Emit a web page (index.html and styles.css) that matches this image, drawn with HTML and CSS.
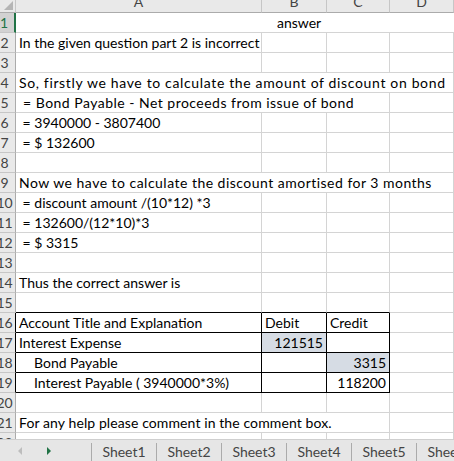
FILE: index.html
```html
<!DOCTYPE html>
<html lang="en">
<head>
    <meta charset="UTF-8">
    <title>answer</title>
    <link rel="stylesheet" href="styles.css">
</head>
<body>
    <div class="sheet">
        <div class="row col-head">
            <div class="corner"><span class="corner-tri"></span></div>
            <div class="ch">A</div>
            <div class="ch">B</div>
            <div class="ch">C</div>
            <div class="ch">D</div>
            <div class="ch"></div>
        </div>

        <div class="row">
            <div class="rh selected">1</div>
            <div class="cell span-all title">answer</div>
        </div>
        <div class="row">
            <div class="rh">2</div>
            <div class="cell">In the given question part 2 is incorrect</div>
            <div class="cell"></div><div class="cell"></div><div class="cell"></div><div class="cell"></div>
        </div>
        <div class="row">
            <div class="rh">3</div>
            <div class="cell"></div><div class="cell"></div><div class="cell"></div><div class="cell"></div><div class="cell"></div>
        </div>
        <div class="row">
            <div class="rh">4</div>
            <div class="cell span-4 loose-lg">So, firstly we have to calculate the amount of discount on bond</div>
            <div class="cell"></div>
        </div>
        <div class="row">
            <div class="rh">5</div>
            <div class="cell span-3 loose-md">&nbsp;= Bond Payable - Net proceeds from issue of bond</div>
            <div class="cell"></div><div class="cell"></div>
        </div>
        <div class="row">
            <div class="rh">6</div>
            <div class="cell">&nbsp;= 3940000 - 3807400</div>
            <div class="cell"></div><div class="cell"></div><div class="cell"></div><div class="cell"></div>
        </div>
        <div class="row">
            <div class="rh">7</div>
            <div class="cell">&nbsp;= $ 132600</div>
            <div class="cell"></div><div class="cell"></div><div class="cell"></div><div class="cell"></div>
        </div>
        <div class="row">
            <div class="rh">8</div>
            <div class="cell"></div><div class="cell"></div><div class="cell"></div><div class="cell"></div><div class="cell"></div>
        </div>
        <div class="row">
            <div class="rh">9</div>
            <div class="cell span-4 loose-md">Now we have to calculate the discount amortised for 3 months</div>
            <div class="cell"></div>
        </div>
        <div class="row">
            <div class="rh">10</div>
            <div class="cell">&nbsp;= discount amount /(10*12) *3</div>
            <div class="cell"></div><div class="cell"></div><div class="cell"></div><div class="cell"></div>
        </div>
        <div class="row">
            <div class="rh">11</div>
            <div class="cell">&nbsp;= 132600/(12*10)*3</div>
            <div class="cell"></div><div class="cell"></div><div class="cell"></div><div class="cell"></div>
        </div>
        <div class="row">
            <div class="rh">12</div>
            <div class="cell">&nbsp;= $ 3315</div>
            <div class="cell"></div><div class="cell"></div><div class="cell"></div><div class="cell"></div>
        </div>
        <div class="row">
            <div class="rh">13</div>
            <div class="cell"></div><div class="cell"></div><div class="cell"></div><div class="cell"></div><div class="cell"></div>
        </div>
        <div class="row">
            <div class="rh">14</div>
            <div class="cell">Thus the correct answer is</div>
            <div class="cell"></div><div class="cell"></div><div class="cell"></div><div class="cell"></div>
        </div>
        <div class="row">
            <div class="rh">15</div>
            <div class="cell b-bottom"></div><div class="cell b-bottom"></div><div class="cell b-bottom"></div><div class="cell"></div><div class="cell"></div>
        </div>

        <div class="row">
            <div class="rh b-right">16</div>
            <div class="cell boxed">Account Title and Explanation</div>
            <div class="cell boxed">Debit</div>
            <div class="cell boxed">Credit</div>
            <div class="cell"></div><div class="cell"></div>
        </div>
        <div class="row">
            <div class="rh b-right">17</div>
            <div class="cell boxed">Interest Expense</div>
            <div class="cell boxed num filled">121515</div>
            <div class="cell boxed"></div>
            <div class="cell"></div><div class="cell"></div>
        </div>
        <div class="row">
            <div class="rh b-right">18</div>
            <div class="cell boxed indent">Bond Payable</div>
            <div class="cell boxed"></div>
            <div class="cell boxed num filled">3315</div>
            <div class="cell"></div><div class="cell"></div>
        </div>
        <div class="row">
            <div class="rh b-right">19</div>
            <div class="cell boxed indent">Interest Payable ( 3940000*3%)</div>
            <div class="cell boxed"></div>
            <div class="cell boxed num">118200</div>
            <div class="cell"></div><div class="cell"></div>
        </div>

        <div class="row">
            <div class="rh">20</div>
            <div class="cell"></div><div class="cell"></div><div class="cell"></div><div class="cell"></div><div class="cell"></div>
        </div>
        <div class="row">
            <div class="rh">21</div>
            <div class="cell span-3 loose-sm">For any help please comment in the comment box.</div>
            <div class="cell"></div><div class="cell"></div>
        </div>
        <div class="row">
            <div class="rh">22</div>
            <div class="cell"></div><div class="cell"></div><div class="cell"></div><div class="cell"></div><div class="cell"></div>
        </div>
    </div>

    <div class="tab-bar">
        <div class="tab-nav">
            <span class="arrow arrow-left"></span>
            <span class="arrow arrow-right"></span>
        </div>
        <div class="tab">Sheet1</div>
        <div class="tab">Sheet2</div>
        <div class="tab">Sheet3</div>
        <div class="tab">Sheet4</div>
        <div class="tab">Sheet5</div>
        <div class="tab">Sheet6</div>
    </div>
</body>
</html>
```

FILE: styles.css
```css
html, body {
    margin: 0;
    padding: 0;
    background: #fff;
}

body {
    width: 454px;
    height: 461px;
    overflow: hidden;
    font-family: Lato, "Noto Sans", sans-serif;
    font-size: 14px;
    color: #000;
}

.sheet {
    height: 447px;
    margin-top: -8px;
    margin-left: -6px;
    overflow: hidden;
}

.row {
    display: grid;
    grid-template-columns: 22px 246px 65px 63px 64px 1fr;
    height: 20px;
}

.row > div {
    box-sizing: border-box;
    height: 20px;
}

/* headers */
.col-head {
    height: 21px;
}

.col-head > div {
    height: 21px;
    background: #e9e9e9;
    border-bottom: 1px solid #ababab;
    border-right: 1px solid #c6c6c6;
    text-align: center;
    line-height: 19px;
    color: #444;
}

.corner {
    position: relative;
}

.corner-tri {
    position: absolute;
    right: 2px;
    bottom: 2px;
    width: 0;
    height: 0;
    border-left: 9px solid transparent;
    border-bottom: 9px solid #b5b5b5;
}

.rh {
    background: #e9e9e9;
    border-right: 1px solid #ababab;
    border-bottom: 1px solid #c6c6c6;
    text-align: center;
    line-height: 20px;
    color: #444;
    font-size: 14px;
}

.rh.selected {
    background: #d2d2d2;
    border-right: 2px solid #217346;
    color: #217346;
}

.rh.b-right {
    border-right-color: #000;
}

/* cells */
.cell {
    border-right: 1px solid #d4d4d4;
    border-bottom: 1px solid #d4d4d4;
    padding: 0 3px;
    line-height: 20px;
    white-space: nowrap;
    overflow: hidden;
}

.span-all {
    grid-column: 2 / -1;
    border-right: none;
}

.span-3 {
    grid-column: span 3;
}

.span-4 {
    grid-column: span 4;
}

.title {
    padding-left: 261px;
}

/* long texts spill wider in the original font */
.loose-lg {
    letter-spacing: 0.65px;
}

.loose-md {
    letter-spacing: 0.48px;
}

.loose-sm {
    letter-spacing: 0.1px;
}

.b-bottom {
    border-bottom-color: #000;
}

.boxed {
    border-right-color: #000;
    border-bottom-color: #000;
}

.num {
    text-align: right;
}

.filled {
    background: #d6dce4;
}

.indent {
    padding-left: 18px;
}

/* sheet tabs */
.tab-bar {
    display: flex;
    height: 22px;
    background: #e6e6e6;
    border-top: 1px solid #cfcfcf;
    box-sizing: border-box;
}

.tab-nav {
    width: 91px;
    flex: none;
    position: relative;
}

.arrow {
    position: absolute;
    top: 7px;
    width: 0;
    height: 0;
    border-top: 4px solid transparent;
    border-bottom: 4px solid transparent;
}

.arrow-left {
    left: 18px;
    border-right: 4px solid #bdbdbd;
}

.arrow-right {
    left: 47px;
    border-left: 4px solid #217346;
}

.tab {
    flex: none;
    width: 65px;
    box-sizing: border-box;
    border-left: 1px solid #ababab;
    margin-top: 3px;
    text-align: center;
    line-height: 18px;
    color: #444;
    font-size: 14px;
}
```
